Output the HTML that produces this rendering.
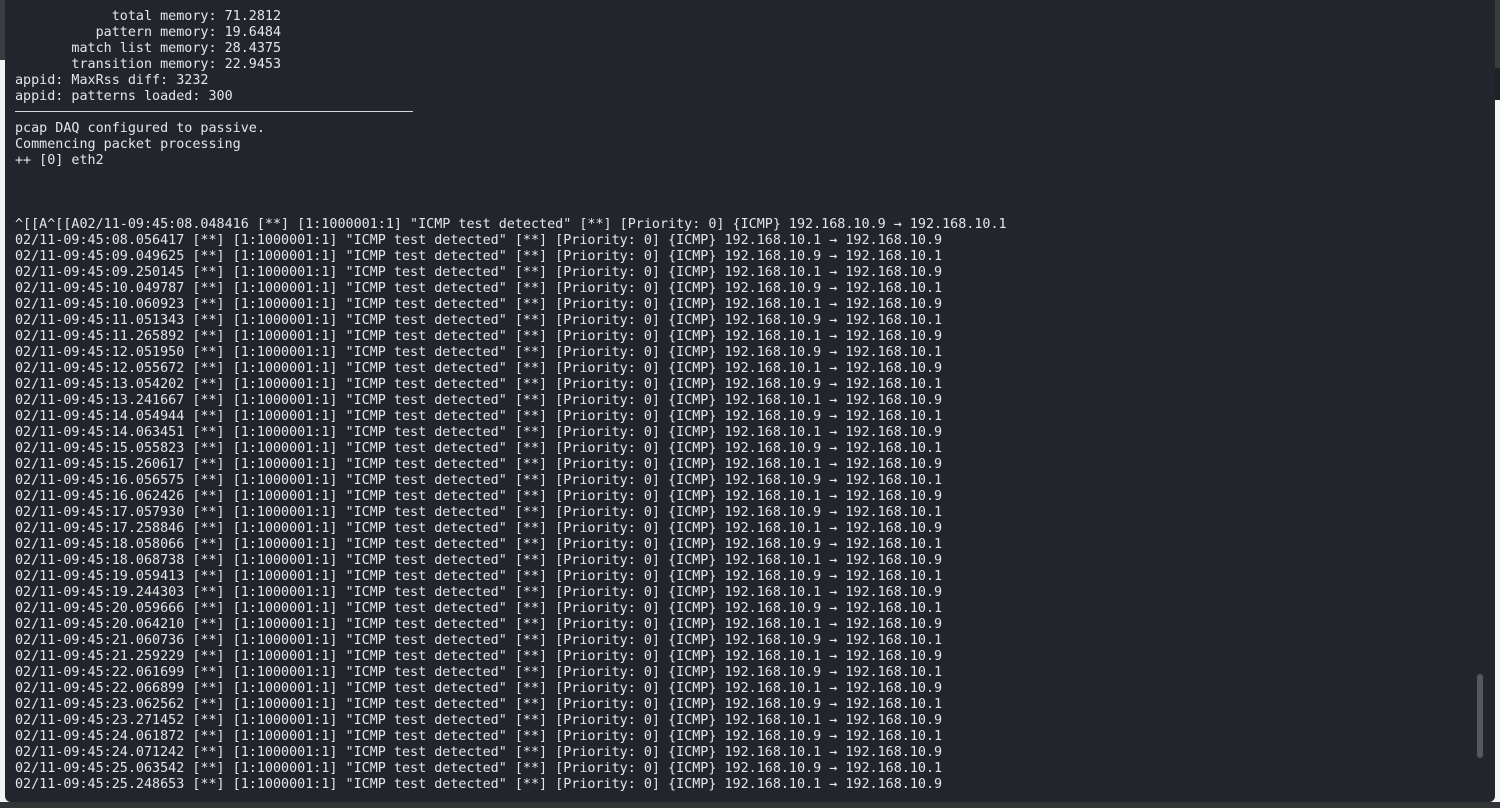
<!DOCTYPE html>
<html><head><meta charset="utf-8"><style>
html,body{margin:0;padding:0;width:1500px;height:808px;overflow:hidden;background:#e9eaec;}
#lstrip{position:absolute;left:0;top:0;width:6px;height:808px;background:linear-gradient(#3b3c40 0,#3b3c40 60px,#f2f2f2 60px,#f2f2f2 100%);}
#rstrip{position:absolute;left:1494px;top:0;width:6px;height:808px;background:linear-gradient(#3b3c40 0,#3b3c40 68px,#1e2126 68px,#1e2126 100px,#f3f4f5 100px);}
#bot{position:absolute;left:0;top:802px;width:1500px;height:6px;background:#333436;}
#term{position:absolute;left:5px;top:0;width:1490px;height:802px;background:#23252d;border-radius:0 0 6px 6px;}
pre{position:absolute;left:10px;top:9px;margin:0;font-family:"DejaVu Sans Mono","Liberation Mono",monospace;font-size:13.4px;line-height:16px;color:#e6e6e6;}
#sep{position:absolute;left:10px;top:111px;width:398px;height:1px;background:#d8d8d8;}
#sb{position:absolute;left:1472px;top:674px;width:6px;height:84px;background:#55575c;border-radius:3px;}
</style></head><body>
<div id="lstrip"></div><div id="rstrip"></div><div id="bot"></div>
<div id="term">
<pre>            total memory: 71.2812
          pattern memory: 19.6484
       match list memory: 28.4375
       transition memory: 22.9453
appid: MaxRss diff: 3232
appid: patterns loaded: 300

pcap DAQ configured to passive.
Commencing packet processing
++ [0] eth2



^[[A^[[A02/11-09:45:08.048416 [**] [1:1000001:1] "ICMP test detected" [**] [Priority: 0] {ICMP} 192.168.10.9 → 192.168.10.1
02/11-09:45:08.056417 [**] [1:1000001:1] "ICMP test detected" [**] [Priority: 0] {ICMP} 192.168.10.1 → 192.168.10.9
02/11-09:45:09.049625 [**] [1:1000001:1] "ICMP test detected" [**] [Priority: 0] {ICMP} 192.168.10.9 → 192.168.10.1
02/11-09:45:09.250145 [**] [1:1000001:1] "ICMP test detected" [**] [Priority: 0] {ICMP} 192.168.10.1 → 192.168.10.9
02/11-09:45:10.049787 [**] [1:1000001:1] "ICMP test detected" [**] [Priority: 0] {ICMP} 192.168.10.9 → 192.168.10.1
02/11-09:45:10.060923 [**] [1:1000001:1] "ICMP test detected" [**] [Priority: 0] {ICMP} 192.168.10.1 → 192.168.10.9
02/11-09:45:11.051343 [**] [1:1000001:1] "ICMP test detected" [**] [Priority: 0] {ICMP} 192.168.10.9 → 192.168.10.1
02/11-09:45:11.265892 [**] [1:1000001:1] "ICMP test detected" [**] [Priority: 0] {ICMP} 192.168.10.1 → 192.168.10.9
02/11-09:45:12.051950 [**] [1:1000001:1] "ICMP test detected" [**] [Priority: 0] {ICMP} 192.168.10.9 → 192.168.10.1
02/11-09:45:12.055672 [**] [1:1000001:1] "ICMP test detected" [**] [Priority: 0] {ICMP} 192.168.10.1 → 192.168.10.9
02/11-09:45:13.054202 [**] [1:1000001:1] "ICMP test detected" [**] [Priority: 0] {ICMP} 192.168.10.9 → 192.168.10.1
02/11-09:45:13.241667 [**] [1:1000001:1] "ICMP test detected" [**] [Priority: 0] {ICMP} 192.168.10.1 → 192.168.10.9
02/11-09:45:14.054944 [**] [1:1000001:1] "ICMP test detected" [**] [Priority: 0] {ICMP} 192.168.10.9 → 192.168.10.1
02/11-09:45:14.063451 [**] [1:1000001:1] "ICMP test detected" [**] [Priority: 0] {ICMP} 192.168.10.1 → 192.168.10.9
02/11-09:45:15.055823 [**] [1:1000001:1] "ICMP test detected" [**] [Priority: 0] {ICMP} 192.168.10.9 → 192.168.10.1
02/11-09:45:15.260617 [**] [1:1000001:1] "ICMP test detected" [**] [Priority: 0] {ICMP} 192.168.10.1 → 192.168.10.9
02/11-09:45:16.056575 [**] [1:1000001:1] "ICMP test detected" [**] [Priority: 0] {ICMP} 192.168.10.9 → 192.168.10.1
02/11-09:45:16.062426 [**] [1:1000001:1] "ICMP test detected" [**] [Priority: 0] {ICMP} 192.168.10.1 → 192.168.10.9
02/11-09:45:17.057930 [**] [1:1000001:1] "ICMP test detected" [**] [Priority: 0] {ICMP} 192.168.10.9 → 192.168.10.1
02/11-09:45:17.258846 [**] [1:1000001:1] "ICMP test detected" [**] [Priority: 0] {ICMP} 192.168.10.1 → 192.168.10.9
02/11-09:45:18.058066 [**] [1:1000001:1] "ICMP test detected" [**] [Priority: 0] {ICMP} 192.168.10.9 → 192.168.10.1
02/11-09:45:18.068738 [**] [1:1000001:1] "ICMP test detected" [**] [Priority: 0] {ICMP} 192.168.10.1 → 192.168.10.9
02/11-09:45:19.059413 [**] [1:1000001:1] "ICMP test detected" [**] [Priority: 0] {ICMP} 192.168.10.9 → 192.168.10.1
02/11-09:45:19.244303 [**] [1:1000001:1] "ICMP test detected" [**] [Priority: 0] {ICMP} 192.168.10.1 → 192.168.10.9
02/11-09:45:20.059666 [**] [1:1000001:1] "ICMP test detected" [**] [Priority: 0] {ICMP} 192.168.10.9 → 192.168.10.1
02/11-09:45:20.064210 [**] [1:1000001:1] "ICMP test detected" [**] [Priority: 0] {ICMP} 192.168.10.1 → 192.168.10.9
02/11-09:45:21.060736 [**] [1:1000001:1] "ICMP test detected" [**] [Priority: 0] {ICMP} 192.168.10.9 → 192.168.10.1
02/11-09:45:21.259229 [**] [1:1000001:1] "ICMP test detected" [**] [Priority: 0] {ICMP} 192.168.10.1 → 192.168.10.9
02/11-09:45:22.061699 [**] [1:1000001:1] "ICMP test detected" [**] [Priority: 0] {ICMP} 192.168.10.9 → 192.168.10.1
02/11-09:45:22.066899 [**] [1:1000001:1] "ICMP test detected" [**] [Priority: 0] {ICMP} 192.168.10.1 → 192.168.10.9
02/11-09:45:23.062562 [**] [1:1000001:1] "ICMP test detected" [**] [Priority: 0] {ICMP} 192.168.10.9 → 192.168.10.1
02/11-09:45:23.271452 [**] [1:1000001:1] "ICMP test detected" [**] [Priority: 0] {ICMP} 192.168.10.1 → 192.168.10.9
02/11-09:45:24.061872 [**] [1:1000001:1] "ICMP test detected" [**] [Priority: 0] {ICMP} 192.168.10.9 → 192.168.10.1
02/11-09:45:24.071242 [**] [1:1000001:1] "ICMP test detected" [**] [Priority: 0] {ICMP} 192.168.10.1 → 192.168.10.9
02/11-09:45:25.063542 [**] [1:1000001:1] "ICMP test detected" [**] [Priority: 0] {ICMP} 192.168.10.9 → 192.168.10.1
02/11-09:45:25.248653 [**] [1:1000001:1] "ICMP test detected" [**] [Priority: 0] {ICMP} 192.168.10.1 → 192.168.10.9</pre>
<div id="sep"></div>
<div id="sb"></div>
</div>
</body></html>
